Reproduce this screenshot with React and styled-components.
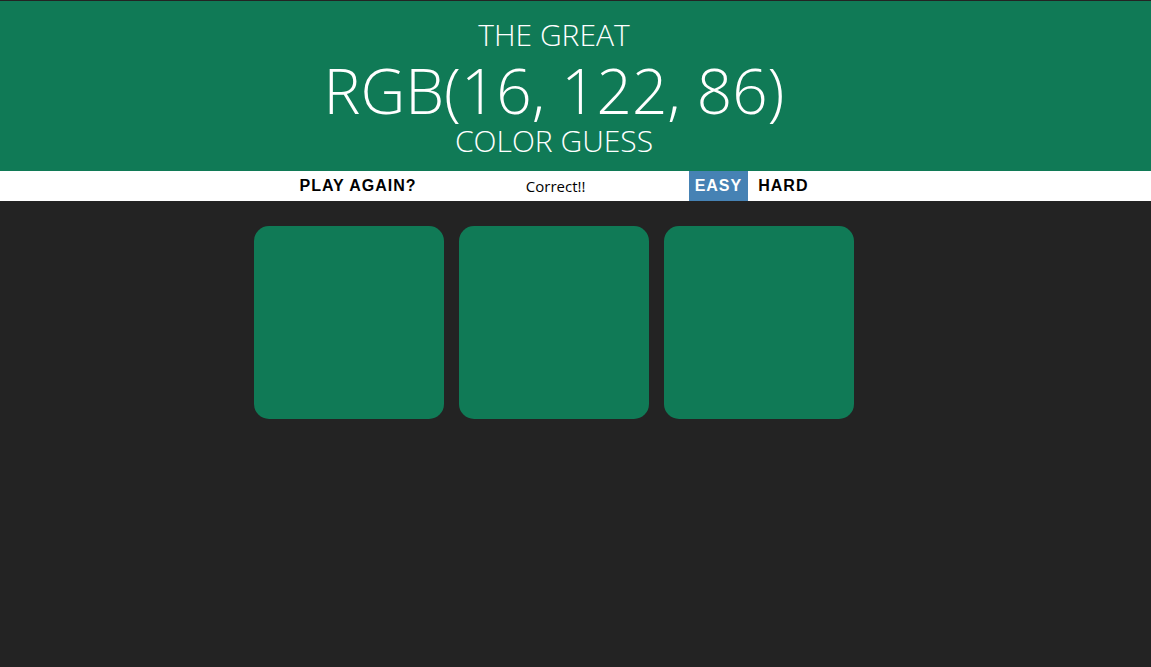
import React from "react";
import styled, { createGlobalStyle } from "styled-components";

const Global = createGlobalStyle`
  html, body { margin: 0; padding: 0; background: #232323; }
  body { font-family: "Open Sans", "Noto Sans", sans-serif; }
  * { box-sizing: border-box; }
`;

const Page = styled.div`
  min-height: 667px;
  border-top: 1px solid #232323;
`;

const Header = styled.header`
  background: rgb(16, 122, 86);
  height: 170px;
  padding: 15px 43px 0 0;
  display: flex;
  flex-direction: column;
  align-items: center;
  color: #fff;
  font-weight: 300;
  text-transform: uppercase;
  text-align: center;
`;

const Line = styled.div`
  font-size: ${(p) => p.$size}px;
  line-height: ${(p) => p.$lh}px;
  margin-top: ${(p) => p.$mt || 0}px;
`;

const Stripe = styled.div`
  background: #fff;
  height: 30px;
  padding-right: 43px;
  display: flex;
  justify-content: center;
  align-items: stretch;
  gap: 4px;
`;

const Button = styled.button`
  border: none;
  margin: 0;
  padding: 1px 6px;
  height: 100%;
  background: ${(p) => (p.$selected ? "steelblue" : "none")};
  color: ${(p) => (p.$selected ? "#fff" : "#000")};
  font-family: "Liberation Sans", Arial, sans-serif;
  font-weight: 700;
  font-size: 16px;
  letter-spacing: 1px;
  text-transform: uppercase;
  cursor: pointer;
`;

const Message = styled.span`
  width: 258px;
  display: flex;
  align-items: center;
  justify-content: center;
  font-size: 15px;
  color: #000;
`;

const Main = styled.main`
  padding-right: 43px;
`;

const Grid = styled.div`
  width: 600px;
  margin: 25px auto 0;
  display: flex;
  gap: 15px;
`;

const Square = styled.div`
  width: 190px;
  height: 193px;
  border-radius: 15px;
  background: ${(p) => p.$color};
`;

export default function App() {
  const colors = ["rgb(16, 122, 86)", "rgb(16, 122, 86)", "rgb(16, 122, 86)"];
  return (
    <>
      <Global />
      <Page>
        <Header>
          <Line $size={30} $lh={38}>The Great</Line>
          <Line $size={62} $lh={62} $mt={5}>RGB(16, 122, 86)</Line>
          <Line $size={30} $lh={40}>Color Guess</Line>
        </Header>
        <Stripe>
          <Button>Play Again?</Button>
          <Message>Correct!!</Message>
          <Button $selected>Easy</Button>
          <Button>Hard</Button>
        </Stripe>
        <Main>
          <Grid>
            {colors.map((c, i) => (
              <Square key={i} $color={c} />
            ))}
          </Grid>
        </Main>
      </Page>
    </>
  );
}
